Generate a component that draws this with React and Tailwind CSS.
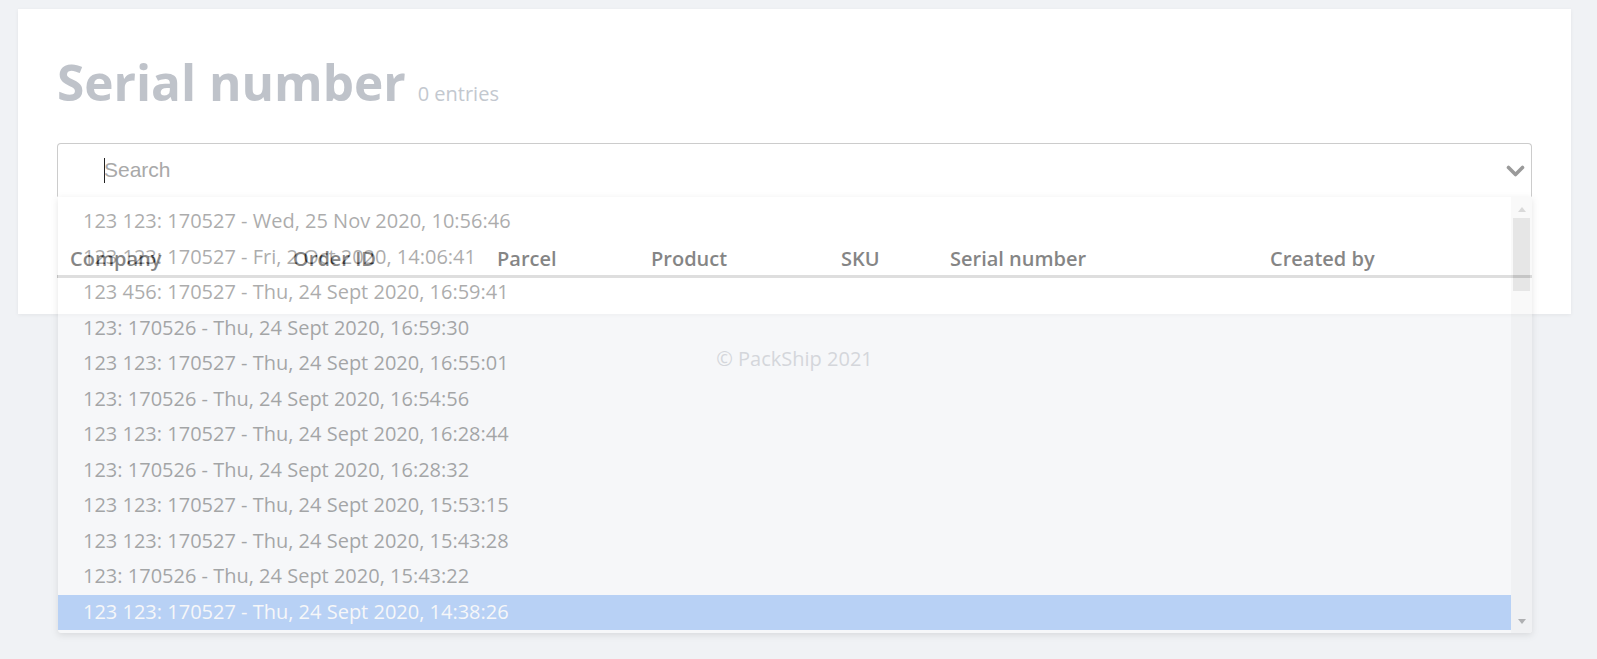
const options = [
  "123 123: 170527 - Wed, 25 Nov 2020, 10:56:46",
  "123 123: 170527 - Fri, 2 Oct 2020, 14:06:41",
  "123 456: 170527 - Thu, 24 Sept 2020, 16:59:41",
  "123: 170526 - Thu, 24 Sept 2020, 16:59:30",
  "123 123: 170527 - Thu, 24 Sept 2020, 16:55:01",
  "123: 170526 - Thu, 24 Sept 2020, 16:54:56",
  "123 123: 170527 - Thu, 24 Sept 2020, 16:28:44",
  "123: 170526 - Thu, 24 Sept 2020, 16:28:32",
  "123 123: 170527 - Thu, 24 Sept 2020, 15:53:15",
  "123 123: 170527 - Thu, 24 Sept 2020, 15:43:28",
  "123: 170526 - Thu, 24 Sept 2020, 15:43:22",
  "123 123: 170527 - Thu, 24 Sept 2020, 14:38:26",
];

const columns = ["Company", "Order ID", "Parcel", "Product", "SKU", "Serial number", "Created by"];

function SerialSelect() {
  return (
    <div className="relative mt-[37px]">
      <div className="flex h-[54px] items-center rounded-t-[4px] border border-b-transparent border-[#cccccc] bg-white pl-[46px] pr-[6px]">
        {/* caret */}
        <div className="-mr-px h-[25px] w-px bg-[#222]" />
        <input
          readOnly
          placeholder="Search"
          className="h-full flex-1 bg-transparent font-['Liberation_Sans',Arial,sans-serif] text-[21px] text-[#333] outline-none placeholder:text-[#a9a9a9]"
        />
        <svg className="mt-[2px] h-[12px] w-[19px]" viewBox="0 0 19 12" fill="none">
          <path d="M2.5 2.5 L9.5 9.5 L16.5 2.5" stroke="#9a9a9a" strokeWidth="3.6" strokeLinecap="round" strokeLinejoin="round" />
        </svg>
      </div>

      {/* open dropdown, faded */}
      <div className="absolute left-[1px] right-0 top-[54px] z-10 flex h-[436px] overflow-hidden rounded-b-[3px] bg-white opacity-40 shadow-[0_2px_6px_rgba(0,0,0,0.25)]">
        <div className="flex-1 pt-[7px]">
          {options.map((opt, i) => (
            <div
              key={i}
              className={`flex h-[35.5px] items-center pb-[1px] pl-[25px] text-[20px] leading-[24px] ${
                i === options.length - 1 ? "bg-[#66a0f5] text-white" : "text-[#333]"
              }`}
            >
              {opt}
            </div>
          ))}
        </div>
        {/* scrollbar */}
        <div className="flex w-[21px] flex-col items-center bg-[#f1f1f1] pb-[9px] pt-[10px]">
          <div className="h-0 w-0 border-x-[4.5px] border-b-[5px] border-x-transparent border-b-[#a3a3a3]" />
          <div className="mt-[6px] h-[73px] w-[17px] bg-[#c1c1c1]" />
          <div className="flex-1" />
          <div className="h-0 w-0 border-x-[4.5px] border-t-[5px] border-x-transparent border-t-[#505050]" />
        </div>
      </div>
    </div>
  );
}

export default function App() {
  return (
    <div className="min-h-[659px] bg-[#f0f2f5] pl-[18px] pr-[26px] pt-[9px] font-['Open_Sans',sans-serif]">
      <div className="bg-white px-[39px] pb-[36px] pt-[49px] shadow-[0_1px_4px_rgba(0,0,0,0.06)]">
        <div className="flex items-baseline">
          <h1 className="text-[49.5px] font-bold leading-[48px] text-[#bfc3ca]">Serial number</h1>
          <span className="ml-[12px] text-[20px] leading-[20px] text-[#c3c8cf]">0 entries</span>
        </div>

        <SerialSelect />

        <div className="mt-[48px] grid grid-cols-[223px_204px_154px_190px_109px_320px_1fr] border-b-[3px] border-[#c9c9c9] pb-[2px]">
          {columns.map((c) => (
            <div key={c} className="pl-[13px] text-[20px] font-semibold leading-[28px] text-[#333]">
              {c}
            </div>
          ))}
        </div>
      </div>

      <div className="mt-[31px] text-center text-[20px] leading-[28px] text-[#b8bcc4]">© PackShip 2021</div>
    </div>
  );
}
